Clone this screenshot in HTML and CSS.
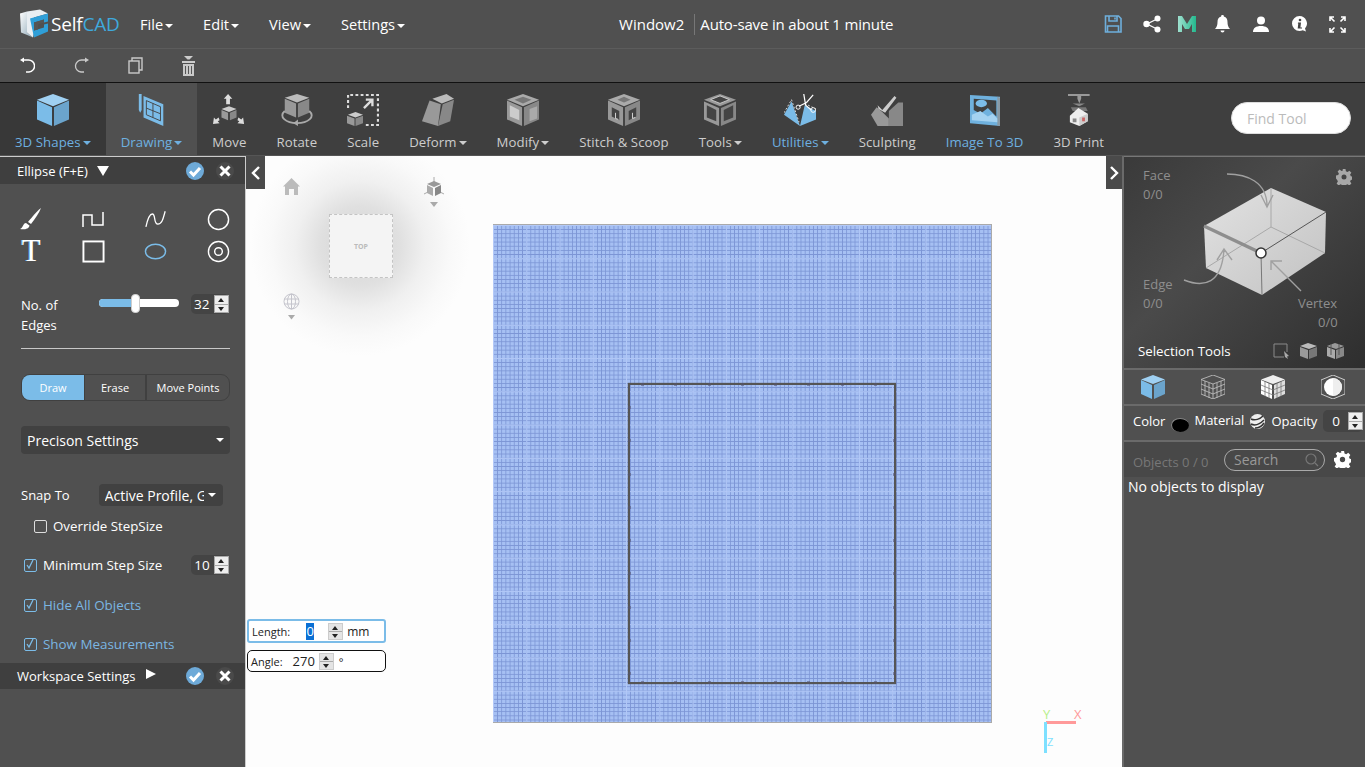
FILE: index.html
```html
<!DOCTYPE html>
<html lang="en">
<head>
<meta charset="utf-8">
<title>SelfCAD</title>
<link rel="stylesheet" href="styles.css">
</head>
<body>
<svg class="defs" width="0" height="0" aria-hidden="true">
  <defs>
    <linearGradient id="logoG" x1="0" y1="0" x2="1" y2="1"><stop offset="0" stop-color="#fff"/><stop offset="1" stop-color="#8fa9b8"/></linearGradient>
    <linearGradient id="mG" x1="0" y1="0" x2="1" y2="0"><stop offset="0" stop-color="#9fe0cf"/><stop offset="1" stop-color="#23b98e"/></linearGradient>
    <linearGradient id="boxG" x1="0" y1="0" x2="1" y2="1"><stop offset="0" stop-color="#e2e2e2"/><stop offset="1" stop-color="#c2c2c2"/></linearGradient>
  </defs>
</svg>
<header class="topbar">
  <div class="logo">
    <svg width="28" height="30" viewBox="0 0 28 29"><path d="M0 4 7 2v21l6 5-7-3-5-2z" fill="url(#logoG)"/><path d="M7 2 20 0 28 4 14 8v15l-1 5-6-5z" fill="#e9eef2"/><path d="M10 9l18-5v8l-4 1v-3l-10 3v8l10-3v-3l4-1v8l-14 6z" fill="#2f9fd8"/><path d="M14 13l10-3v3l-6 2v5l-4 1z" fill="#555"/></svg>
    <span class="logo-text">Self<span class="logo-cad">CAD</span></span>
  </div>
  <nav class="menu">
    <span class="menu-item">File<i class="caret"></i></span>
    <span class="menu-item">Edit<i class="caret"></i></span>
    <span class="menu-item">View<i class="caret"></i></span>
    <span class="menu-item">Settings<i class="caret"></i></span>
  </nav>
  <div class="title"><span>Window2</span><span class="title-sep"></span><span class="title-save">Auto-save in about 1 minute</span></div>
  <div class="top-icons">
    <svg class="ti-save" width="18" height="18" viewBox="0 0 18 18" fill="none" stroke="#6eaedb" stroke-width="1.6"><path d="M1.5 1h13l2.5 2.5V17H1.500z"/><path d="M5 1v5h8V1M11 2.500v2M3.500 17v-6h11v6"/></svg>
    <svg class="ti-share" width="18" height="18" viewBox="0 0 18 18"><g fill="#fff"><circle cx="14.500" cy="3.500" r="3"/><circle cx="3.500" cy="9" r="3.200"/><circle cx="14.500" cy="14.500" r="3"/></g><path d="M14 4 4 9l10 5" fill="none" stroke="#fff" stroke-width="1.300"/></svg>
    <svg class="ti-m" width="18" height="16" viewBox="0 0 18 16"><path d="M0 0h4l5 8 5-8h4v16h-4V8l-3 5H7L4 8v8H0z" fill="url(#mG)"/></svg>
    <svg class="ti-bell" width="15" height="18" viewBox="0 0 15 18"><path d="M7.500 0a1.300 1.300 0 0 1 1.300 1.600C11.500 2.300 12.500 4.500 12.500 7c0 3 .6 4.800 2.500 7H0c1.900-2.200 2.500-4 2.500-7 0-2.500 1-4.700 3.700-5.400A1.300 1.300 0 0 1 7.500 0z" fill="#fff"/><path d="M5.500 15.500h4a2 2 0 0 1-4 0z" fill="#fff"/></svg>
    <svg class="ti-user" width="16" height="16" viewBox="0 0 16 16"><circle cx="8" cy="4.500" r="4" fill="#fff"/><path d="M0 16c0-4 3-6 8-6s8 2 8 6z" fill="#fff"/></svg>
    <svg class="ti-info" width="15" height="16" viewBox="0 0 15 16"><path d="M7.500 0a7.500 7.500 0 1 0 0 15c1.200 0 2.200-.2 3.200-.7l3.300 1.200-1-3A7.500 7.500 0 0 0 7.500 0z" fill="#fff"/><circle cx="8" cy="4" r="1.300" fill="#444"/><path d="M6 6.500h3l-.6 5H10v1H5.700l.6-5H5.800z" fill="#444"/></svg>
    <svg class="ti-full" width="17" height="17" viewBox="0 0 17 17" fill="none" stroke="#fff" stroke-width="1.600"><path d="M1 5V1h4M1 1l4.500 4.500M12 1h4v4M16 1l-4.500 4.500M1 12v4h4M1 16l4.500-4.500M16 12v4h-4M16 16l-4.500-4.500"/></svg>
  </div>
</header>
<div class="quickbar">
  <svg class="q-undo" width="16" height="17" viewBox="0 0 16 17" fill="none" stroke="#fff" stroke-width="1.500"><path d="M4 3h5a6 6 0 0 1 1 12H7"/><path d="M1 3l4-2.500v5z" fill="#fff" stroke="none"/></svg>
  <svg class="q-redo" width="16" height="17" viewBox="0 0 16 17" fill="none" stroke="#c9c9c9" stroke-width="1.300"><path d="M12 3H8a6 6 0 0 0-1 12h3"/><path d="M15 3l-4-2.500v5z" fill="#c9c9c9" stroke="none"/></svg>
  <svg class="q-copy" width="15" height="17" viewBox="0 0 15 17" fill="none" stroke="#c9c9c9" stroke-width="1.400"><rect x="1" y="4" width="10" height="12"/><path d="M4 4V1h10v12h-3"/></svg>
  <svg class="q-trash" width="13" height="20" viewBox="0 0 13 20"><path d="M2 0h9L7.500 3.500h-2z" fill="#ccc"/><path d="M0 5h13v2H0z" fill="#ccc"/><path d="M1 8h11v12H1z" fill="#c9c9c9"/><path d="M3.500 10v8M6.500 10v8M9.500 10v8" stroke="#555"/></svg>
</div>
<div class="toolbar">
  <div class="tool tool-shapes blue">
    <svg viewBox="0 0 34 34"><path d="M17 0 34 6 17 13 0 6z" fill="#9fd0f2"/><path d="M0 7l16 7v20L0 27z" fill="#7bbce8"/><path d="M18 14l16-7v20l-16 7z" fill="#6ba4cc"/></svg>
    <span class="tool-label">3D Shapes<i class="caret"></i></span>
  </div>
  <div class="tool tool-drawing blue">
    <svg viewBox="0 0 34 34"><path d="M3 0h3v17l-1.500 3L3 17z" fill="#7bbce8"/><path d="M8 2l21 9v23L8 25z" fill="#7bbce8"/><path d="M11 7l15 6.500v15L11 22zM18 10v15M11 15l15 6" fill="none" stroke="#444" stroke-width="1"/></svg>
    <span class="tool-label">Drawing<i class="caret"></i></span>
  </div>
  <div class="tool">
    <svg viewBox="0 0 34 34"><path d="M16 0l4.500 5H18v6h-4V5h-2.500z" fill="#ddd"/><path d="M17 13l8 3-8 3-8-3z" fill="#ccc"/><path d="M9 17l7 3v8l-7-3z" fill="#999"/><path d="M18 20l7-3v8l-7 3z" fill="#888"/><path d="M0 32l1-7 2 2 3-2 1 3-2 1 2 2zM33 32l-1-7-2 2-3-2-1 3 2 1-2 2z" fill="#ddd"/></svg>
    <span class="tool-label">Move</span>
  </div>
  <div class="tool">
    <svg viewBox="0 0 34 34"><path d="M17 0l13 4-13 5L4 4z" fill="#bbb"/><path d="M4 5l12 5v15L4 20z" fill="#999"/><path d="M18 10l12-5v15l-12 5z" fill="#888"/><path d="M4 18C-3 24 5 31 17 31s20-7 13-13" fill="none" stroke="#aaa" stroke-width="2"/><path d="M18 27l-5 4 5 3z" fill="#aaa"/></svg>
    <span class="tool-label">Rotate</span>
  </div>
  <div class="tool">
    <svg viewBox="0 0 34 34"><path d="M1 15V1h32v32H20" fill="none" stroke="#ddd" stroke-width="2.500" stroke-dasharray="3 2.500"/><path d="M18 15 27 6M20 6h7v7" fill="none" stroke="#ddd" stroke-width="2.500"/><path d="M9 19l8 3-8 3-8-3z" fill="#ccc"/><path d="M0 23l8 3v8l-8-3z" fill="#999"/><path d="M9 26l8-3v8l-8 3z" fill="#888"/></svg>
    <span class="tool-label">Scale</span>
  </div>
  <div class="tool">
    <svg viewBox="0 0 34 34"><path d="M11 5 26 0l8 5-13 5z" fill="#bbb"/><path d="M8 7l12 4-3 23-17-5z" fill="#999"/><path d="M22 11l12-5-4 23-13 5z" fill="#888"/></svg>
    <span class="tool-label">Deform<i class="caret"></i></span>
  </div>
  <div class="tool">
    <svg viewBox="0 0 34 34"><path d="M17 0l17 6-17 7L0 6z" fill="#aaa"/><path d="M8 6l9-3 9 3-9 4z" fill="#777"/><path d="M0 7l16 7v20L0 27z" fill="#999"/><path d="M18 14l16-7v20l-16 7z" fill="#888"/><path d="M3 12l10 5v11L3 24z" fill="#ccc"/><path d="M24 16l8-3v13l-8 3z" fill="#aaa"/></svg>
    <span class="tool-label">Modify<i class="caret"></i></span>
  </div>
  <div class="tool">
    <svg viewBox="0 0 34 34"><path d="M17 0l17 6-17 7L0 6z" fill="#aaa"/><path d="M10 6l7-3 7 3-7 3z" fill="#777"/><path d="M0 7l16 7v20L0 27z" fill="#999"/><path d="M18 14l16-7v20l-16 7z" fill="#888"/><path d="M4 14l8 4v10l-8-4zM22 18l8-4v10l-8 4z" fill="#444"/><path d="M8 20v6l3 1M26 20v6l3-1" fill="none" stroke="#ddd"/></svg>
    <span class="tool-label">Stitch &amp; Scoop</span>
  </div>
  <div class="tool">
    <svg viewBox="0 0 34 34"><path d="M17 0l17 6-17 7L0 6z" fill="#999"/><path d="M7 6l10-4 10 4-10 4z" fill="#444" stroke="#ccc"/><path d="M0 8l16 7v19L0 27z" fill="#999"/><path d="M18 15l16-7v19l-16 7z" fill="#888"/><path d="M3 12l10 5v12L3 25zM21 17l10-5v13l-10 4z" fill="#444"/></svg>
    <span class="tool-label">Tools<i class="caret"></i></span>
  </div>
  <div class="tool blue">
    <svg viewBox="0 0 34 34"><path d="M0 22 8 8l9 26zM17 34l5-22 12 6v9z" fill="#7bbce8"/><path d="M0 20 8 6l8 24M22 10l12 6" fill="none" stroke="#ddd" stroke-dasharray="2 2"/><path d="M21 0l2 12 6 5M31 1 24 9l-8 4" fill="none" stroke="#fff" stroke-width="1.300"/><circle cx="31" cy="17" r="2.500" fill="none" stroke="#fff"/><circle cx="15" cy="14" r="2.200" fill="none" stroke="#fff"/></svg>
    <span class="tool-label">Utilities<i class="caret"></i></span>
  </div>
  <div class="tool">
    <svg viewBox="0 0 34 34"><path d="M0 22l6-8 6 5 7 7v8H7z" fill="#999"/><path d="M7 12l5 5L25 2l2 2-12 16-7-4z" fill="#ccc"/><path d="M19 34V18l10-9h5v25z" fill="#888"/></svg>
    <span class="tool-label">Sculpting</span>
  </div>
  <div class="tool blue">
    <svg viewBox="0 0 32 34"><path d="M0 1l32 2v31L0 31z" fill="#6fb1de"/><path d="M29 3l3 1v30l-3-.5z" fill="#8a9aa5"/><path d="M4 5l24 2v17l-9-9-8 6-7-4z" fill="#3f3f3f"/><ellipse cx="12" cy="10" rx="6" ry="4" fill="#7bbce8"/><path d="M2 22l9-4 8 6 5-3 5 5v4L2 28z" fill="#a4d2f1"/></svg>
    <span class="tool-label">Image To 3D</span>
  </div>
  <div class="tool">
    <svg viewBox="0 0 24 34"><path d="M0 0h23v2H14v3l-2 5-2-5V2H0z" fill="#999"/><path d="M5 10h13l-6 3z" fill="#888"/><path d="M3 14h16l2 4H5z" fill="#777"/><path d="M2 23l9-8 10 6v8l-9 5-10-4z" fill="#eee"/><path d="M12 25l9-4v8l-9 5z" fill="#ccc"/><rect x="5" y="26" width="4" height="4" fill="#888"/><rect x="15" y="25" width="3" height="4" fill="#c66"/></svg>
    <span class="tool-label">3D Print</span>
  </div>
  <div class="find">Find Tool</div>
</div>
<main class="workspace">
  <aside class="left">
    <div class="panel-head">
      <span class="panel-name">Ellipse (F+E)</span><i class="tri-down"></i>
      <span class="head-actions"><i class="ok"><svg width="18" height="18" viewBox="0 0 18 18"><path d="M4 9.500l3.500 3.500L14 6" fill="none" stroke="#fff" stroke-width="3"/></svg></i><i class="close"><svg width="12" height="12" viewBox="0 0 12 12"><path d="M1.500 1.500l9 9M10.500 1.500l-9 9" stroke="#fff" stroke-width="3"/></svg></i></span>
    </div>
    <div class="shapes">
      <svg width="22" height="22" viewBox="0 0 22 22"><path d="M21 0C17 3 12 9 8 14l3 2C15 11 19 5 21 0z" fill="#fff"/><path d="M6 15c-3 0-3 5-6 6 4 1 9 0 9.500-3.500z" fill="#fff"/></svg>
      <svg width="22" height="15" viewBox="0 0 22 15" fill="none" stroke="#fff" stroke-width="1.500"><path d="M1 15V3h9v10h11V0"/></svg>
      <svg width="22" height="17" viewBox="0 0 24 18" fill="none" stroke="#fff" stroke-width="1.400"><path d="M1 17C3 8 5 3 8 3c4 0 1 11 6 11 5 0 6-7 8-14"/></svg>
      <svg width="23" height="23" viewBox="0 0 24 24" fill="none" stroke="#fff" stroke-width="1.500"><circle cx="12" cy="12" r="10.500"/></svg>
      <span class="t-glyph">T</span>
      <svg width="23" height="23" viewBox="0 0 24 24" fill="none" stroke="#fff" stroke-width="2"><rect x="1.500" y="1.500" width="21" height="21"/></svg>
      <svg width="23" height="17" viewBox="0 0 24 17" fill="none" stroke="#7bbce8" stroke-width="1.500"><ellipse cx="12" cy="8.500" rx="10.500" ry="7.500"/></svg>
      <svg width="23" height="23" viewBox="0 0 24 24" fill="none" stroke="#fff" stroke-width="1.500"><circle cx="12" cy="12" r="10.500"/><circle cx="12" cy="12" r="4"/></svg>
    </div>
    <div class="edges-row">
      <span class="edges-label">No. of<br>Edges</span>
      <div class="slider"><div class="slider-fill"></div><div class="slider-knob"></div></div>
      <span class="num num-edges">32<i class="spin"><b></b><b></b></i></span>
    </div>
    <div class="rule"></div>
    <div class="btn-group"><span class="seg active seg-draw">Draw</span><span class="seg seg-erase">Erase</span><span class="seg seg-move">Move Points</span></div>
    <div class="precision">Precison Settings<i class="caret big"></i></div>
    <div class="snap-row"><span>Snap To</span><span class="snap-sel"><span class="snap-val">Active Profile, G</span><i class="caret"></i></span></div>
    <label class="override"><i class="box"></i>Override StepSize</label>
    <div class="check-row step-row"><i class="box on"><svg width="12" height="12" viewBox="0 0 12 12"><path d="M3 6l2 3 4-8" fill="none" stroke="#7bbce8" stroke-width="1.300"/></svg></i><span class="white">Minimum Step Size</span><span class="num num-step">10<i class="spin"><b></b><b></b></i></span></div>
    <div class="check-row hide-row"><i class="box on"><svg width="12" height="12" viewBox="0 0 12 12"><path d="M3 6l2 3 4-8" fill="none" stroke="#7bbce8" stroke-width="1.300"/></svg></i><span>Hide All Objects</span></div>
    <div class="check-row show-row"><i class="box on"><svg width="12" height="12" viewBox="0 0 12 12"><path d="M3 6l2 3 4-8" fill="none" stroke="#7bbce8" stroke-width="1.300"/></svg></i><span>Show Measurements</span></div>
    <div class="panel-head ws-head">
      <span class="panel-name">Workspace Settings</span><i class="tri-right"></i>
      <span class="head-actions"><i class="ok"><svg width="18" height="18" viewBox="0 0 18 18"><path d="M4 9.500l3.500 3.500L14 6" fill="none" stroke="#fff" stroke-width="3"/></svg></i><i class="close"><svg width="12" height="12" viewBox="0 0 12 12"><path d="M1.500 1.500l9 9M10.500 1.500l-9 9" stroke="#fff" stroke-width="3"/></svg></i></span>
    </div>
  </aside>
  <section class="viewport">
    <div class="glow"></div>
    <div class="collapse collapse-l"><svg width="10" height="16" viewBox="0 0 10 16"><path d="M8 2 2 8l6 6" fill="none" stroke="#fff" stroke-width="2.400"/></svg></div>
    <div class="collapse collapse-r"><svg width="10" height="16" viewBox="0 0 10 16"><path d="M2 2l6 6-6 6" fill="none" stroke="#fff" stroke-width="2.400"/></svg></div>
    <div class="viewcube">TOP</div>
    <svg class="v-home" width="17" height="17" viewBox="0 0 17 17"><path d="M8.500 0 17 8.500h-2V17h-4v-6H6v6H2V8.500H0z" fill="#bbb"/></svg>
    <svg class="v-cube" width="20" height="31" viewBox="0 0 20 31"><path d="M10 0v6M0 17l4-2M20 17l-4-2" stroke="#aaa"/><path d="M10 4l7 3-7 3-7-3z" fill="#999"/><path d="M3 8l6 3v8l-6-3z" fill="#aaa"/><path d="M11 11l6-3v8l-6 3z" fill="#888"/><path d="M6 25h8l-4 5z" fill="#aaa"/></svg>
    <svg class="v-globe" width="17" height="27" viewBox="0 0 17 27" fill="none" stroke="#c4c4cc"><circle cx="8.500" cy="8.500" r="7.500"/><ellipse cx="8.500" cy="8.500" rx="4" ry="7.500"/><path d="M1 6h15M1 11h15M8.500 1v15"/><path d="M5 22h7l-3.500 4.500z" fill="#aaa" stroke="none"/></svg>
    <div class="grid-plane"><div class="sketch"></div></div>
    <div class="measure m-length"><span class="m-label">Length:</span><span class="m-sel">0</span><i class="spin"><b></b><b></b></i><span class="m-unit">mm</span></div>
    <div class="measure m-angle"><span class="m-label">Angle:</span><span class="m-val">270</span><i class="spin"><b></b><b></b></i><span class="m-unit">°</span></div>
    <div class="axes"><span class="ax-y">Y</span><span class="ax-x">X</span><span class="ax-z">Z</span></div>
  </section>
  <aside class="right">
    <div class="sel-box">
      <svg class="sel-art" width="241" height="210" viewBox="0 0 241 210">
        <path d="M147 31 202 55 201 96 138 138 82 111 80 69z" fill="url(#boxG)"/>
        <path d="M147 31v39M147 70 82 111M147 70l54 26" stroke="#a8a8a8" fill="none"/>
        <path d="M137 96 202 55" stroke="#555" fill="none"/>
        <path d="M137 96l1 42" stroke="#777" fill="none"/>
        <path d="M80 69l57 27" stroke="#8e8e8e" stroke-width="3.500" fill="none"/>
        <circle cx="137" cy="96" r="5" fill="#fff" stroke="#333" stroke-width="1.500"/>
        <path d="M103 17c20 0 40 8 40 32M137 38l6 12 6-12" fill="none" stroke="#a0a0a0" stroke-width="1.400"/>
        <path d="M60 123c20 8 38 4 40-31M93 103l7-11 8 11" fill="none" stroke="#a0a0a0" stroke-width="1.400"/>
        <path d="M177 134l-30-30M147 113v-9h11" fill="none" stroke="#a0a0a0" stroke-width="1.400"/>
      </svg>
      <span class="sel-face">Face<br>0/0</span>
      <span class="sel-edge">Edge<br>0/0</span>
      <span class="sel-vertex">Vertex<br><span class="sel-v-num">0/0</span></span>
      <svg class="sel-gear" width="16" height="16" viewBox="0 0 16 16"><path d="M6.500 0h3l.4 2.300 1.600.7 1.900-1.300 2 2-1.300 1.900.7 1.600 2.200.4v3l-2.200.4-.7 1.600 1.300 1.900-2 2-1.900-1.300-1.600.7-.4 2.200h-3l-.4-2.200-1.600-.7-1.900 1.300-2-2 1.300-1.900-.7-1.600L0 9.500v-3l2.200-.4.700-1.600L1.600 2.600l2-2 1.900 1.300 1.600-.7zM8 5.500a2.500 2.500 0 1 0 0 5 2.500 2.500 0 0 0 0-5z" fill="#a8a8a8" fill-rule="evenodd"/></svg>
      <div class="sel-tools">
        <span class="sel-title">Selection Tools</span>
        <svg class="st1" width="17" height="16" viewBox="0 0 17 16"><path d="M11 14H1V1h13v8" fill="none" stroke="#8a8a8a" stroke-width="1"/><path d="M11 8l5 5-2 .5 1 2.500-3-2z" fill="#aaa"/></svg>
        <svg class="st2" width="17" height="16" viewBox="0 0 17 16"><path d="M0 3l8-3 9 3-8 3z" fill="#bbb"/><path d="M0 4l8 3v9l-8-3z" fill="#999"/><path d="M9 7l8-3v9l-8 3z" fill="#777"/></svg>
        <svg class="st3" width="17" height="16" viewBox="0 0 17 16"><path d="M0 3l8-3 9 3-8 3z" fill="#999"/><path d="M0 4l8 3v9l-8-3z" fill="#aaa"/><path d="M9 7l8-3v9l-8 3z" fill="#888"/><path d="M4 1v11M12 1v11" stroke="#555"/></svg>
      </div>
    </div>
    <div class="view-modes">
      <svg width="24" height="24" viewBox="0 0 24 24"><path d="M12 0l12 4.500L12 9 0 4.500z" fill="#9fd0f2"/><path d="M0 5l11 5v14L0 19z" fill="#7bbce8"/><path d="M13 10l11-5v14l-11 5z" fill="#6ba4cc"/></svg>
      <svg width="24" height="24" viewBox="0 0 24 24" fill="none" stroke="#bbb" stroke-width=".9"><path d="M12 0l12 4.500L12 9 0 4.500zM0 4.500V19l12 5V9M24 4.500V19l-12 5M4 6v15M8 8v15M16 8v15M20 6v15M0 9l12 5 12-5M0 14l12 5 12-5"/></svg>
      <svg width="24" height="24" viewBox="0 0 24 24"><path d="M12 0l12 4.500L12 9 0 4.500z" fill="#eee"/><path d="M0 5l11 5v14L0 19z" fill="#fff"/><path d="M13 10l11-5v14l-11 5z" fill="#ddd"/><path d="M4 6v15M8 8v15M16 8v15M20 6v15M0 10l12 5 12-5M0 15l12 5 12-5" stroke="#777" stroke-width=".8" fill="none"/></svg>
      <svg width="24" height="24" viewBox="0 0 24 24"><path d="M12 0 24 5v14l-12 5L0 19V5z" fill="none" stroke="#ccc"/><circle cx="12" cy="12" r="9" fill="#fff"/><path d="M12 3a9 9 0 0 1 0 18z" fill="#eee"/></svg>
    </div>
    <div class="props">
      <span class="p-color">Color</span><i class="swatch"></i>
      <span class="p-mat">Material</span>
      <svg class="p-ball" width="15" height="15" viewBox="0 0 15 15"><circle cx="7.500" cy="7.500" r="7.500" fill="#eee"/><path d="M1 5c4 2 9 0 12-3M1 10c4 2 9 0 13-4M5 14c3 0 7-2 9-5" fill="none" stroke="#333" stroke-width="1.500"/></svg>
      <span class="p-op">Opacity</span>
      <span class="num num-op">0<i class="spin"><b></b><b></b></i></span>
    </div>
    <div class="obj-head">
      <span class="obj-count">Objects 0 / 0</span>
      <span class="search">Search<svg width="14" height="14" viewBox="0 0 14 14" fill="none" stroke="#777" stroke-width="1.200"><circle cx="6" cy="6" r="5"/><path d="M10 10l3 3"/></svg></span>
      <svg class="obj-gear" width="17" height="17" viewBox="0 0 16 16"><path d="M6.500 0h3l.4 2.300 1.600.7 1.900-1.300 2 2-1.300 1.900.7 1.600 2.200.4v3l-2.200.4-.7 1.600 1.300 1.900-2 2-1.900-1.300-1.600.7-.4 2.200h-3l-.4-2.200-1.600-.7-1.900 1.300-2-2 1.300-1.900-.7-1.600L0 9.500v-3l2.200-.4.700-1.600L1.600 2.600l2-2 1.900 1.300 1.600-.7zM8 5.500a2.500 2.500 0 1 0 0 5 2.500 2.500 0 0 0 0-5z" fill="#fff" fill-rule="evenodd"/></svg>
    </div>
    <div class="obj-list">No objects to display</div>
  </aside>
</main>
</body>
</html>
```
FILE: styles.css
```css
* { box-sizing: border-box; }
html, body { margin: 0; height: 100%; }
body {
  display: flex; flex-direction: column; height: 767px; overflow: hidden;
  font-family: "Open Sans", "Liberation Sans", sans-serif; color: #fff; background: #505050;
}
i { font-style: normal; display: inline-block; }
svg { display: block; flex: none; }
.defs { position: absolute; }
.caret { width: 0; height: 0; border-left: 4px solid transparent; border-right: 4px solid transparent; border-top: 4px solid currentColor; margin-left: 2px; vertical-align: middle; }

.topbar { height: 49px; flex: none; display: flex; align-items: center; background: #505050; border-bottom: 1px solid #5c5c5c; }
.logo { display: flex; align-items: center; margin-left: 20px; width: 120px; }
.logo-text { font-size: 19px; margin-left: 3px; letter-spacing: -.2px; }
.logo-cad { color: #3fa9dc; }
.menu { display: flex; gap: 30px; font-size: 14.6px; }
.menu-item { white-space: nowrap; }
.title { margin-left: 214px; display: flex; align-items: center; font-size: 15px; white-space: nowrap; }
.title-sep { width: 1px; height: 21px; background: #777; margin: 0 5px 0 10px; }
.title-save { letter-spacing: -.16px; }
.top-icons { margin-left: auto; margin-right: 19px; display: flex; align-items: center; }
.ti-share { margin-left: 21px; }
.ti-m { margin-left: 17px; }
.ti-bell { margin-left: 19px; }
.ti-user { margin-left: 23px; }
.ti-info { margin-left: 23px; }
.ti-full { margin-left: 22px; }

.quickbar { height: 34px; flex: none; display: flex; align-items: center; padding-left: 19px; background: #505050; border-bottom: 1px solid #111; }
.q-redo { margin-left: 39px; }
.q-copy { margin-left: 38px; }
.q-trash { margin-left: 39px; }

.toolbar { height: 73px; flex: none; display: flex; background: #3f3f3f; border-bottom: 1px solid #555; position: relative; }
.tool { display: flex; flex-direction: column; align-items: center; padding: 11px 15px 0; color: #cdcdcd; }
.tool svg { height: 32px; width: auto; }
.tool-label { margin-top: 7px; font-size: 13.2px; letter-spacing: .08px; line-height: 18px; white-space: nowrap; }
.blue { color: #6eb0e0; }
.tool-shapes { background: #383838; }
.tool-drawing { background: #505050; }
.find { margin: 19px 14px 0 auto; width: 120px; height: 32px; border-radius: 16px; background: #fff; border: 1px solid #ddd; color: #bbb; font-size: 14px; line-height: 31px; padding-left: 15px; }

.workspace { flex: 1; min-height: 0; display: flex; }

.left { width: 246px; flex: none; background: #505050; border-right: 1px solid #ccc; font-size: 13px; display: flex; flex-direction: column; }
.panel-head { height: 28px; flex: none; display: flex; align-items: center; background: #3f3f3f; padding-left: 17px; border-top: 1px solid #ccc; }
.panel-name { font-size: 13px; white-space: nowrap; }
.tri-down { margin-left: 9px; width: 0; height: 0; border-left: 6px solid transparent; border-right: 6px solid transparent; border-top: 10px solid #fff; }
.tri-right { margin-left: 11px; margin-top: -5px; width: 0; height: 0; border-top: 5.500px solid transparent; border-bottom: 5.500px solid transparent; border-left: 10px solid #fff; }
.head-actions { margin-left: auto; margin-right: 11px; display: flex; align-items: center; gap: 12px; }
.ok { width: 18px; height: 18px; border-radius: 50%; background: #6eaad8; }
.close { width: 18px; height: 18px; border-radius: 50%; background: #4a4a4a; padding: 3px; }
.shapes { display: grid; grid-template-columns: repeat(4, 62.3px); grid-auto-rows: 32px; justify-items: center; align-items: center; margin-top: 19px; }
.t-glyph { font-family: "Liberation Serif", serif; font-size: 31px; line-height: 28px; color: #fff; text-shadow: -1px 0 #6eb0e0; }
.edges-row { margin-top: 18px; display: flex; padding-left: 21px; height: 63px; position: relative; }
.edges-label { line-height: 20px; width: 78px; margin-top: 10px; }
.slider { width: 80px; height: 8px; margin-top: 14px; border-radius: 4px; background: #fff; position: relative; }
.slider-fill { width: 36px; height: 100%; border-radius: 4px 0 0 4px; background: #7bbce8; }
.slider-knob { position: absolute; left: 32px; top: -5px; width: 9px; height: 19px; border-radius: 4px; background: #fff; border: 1px solid #ccc; }
.num { display: flex; align-items: center; color: #fff; background: #444; border-radius: 5px; height: 20px; font-size: 13.500px; }
.num-edges { width: 38px; margin-left: 12px; margin-top: 9px; padding-left: 3px; justify-content: space-between; }
.spin { display: flex; flex-direction: column; width: 15px; height: 18px; background: #eee; border: 1px solid #aaa; }
.spin b { flex: 1; position: relative; }
.spin b:first-child { border-bottom: 1px solid #aaa; }
.spin b::after { content: ""; position: absolute; left: 3px; top: 2px; width: 0; height: 0; border-left: 3.500px solid transparent; border-right: 3.500px solid transparent; }
.spin b:first-child::after { border-bottom: 4px solid #222; }
.spin b:last-child::after { border-top: 4px solid #222; }
.rule { height: 1px; background: #c8c8c8; margin: 0 15px 0 21px; }
.btn-group { display: flex; margin: 25px 15px 0 21px; height: 27px; border: 1px solid #404040; border-radius: 9px; font-size: 11px; line-height: 25px; text-align: center; overflow: hidden; }
.seg { border-right: 2px solid #404040; }
.seg-draw { width: 63px; background: #7bbce8; border-right: 1px solid #404040; }
.seg-erase { width: 62px; }
.seg-move { flex: 1; border-right: 0; }
.precision { display: flex; align-items: center; justify-content: space-between; margin: 25px 15px 0 21px; height: 28px; padding: 0 6px; background: #414141; border-radius: 4px; font-size: 14px; }
.snap-row { display: flex; align-items: center; margin: 30px 0 0 21px; font-size: 13px; }
.snap-sel { margin-left: 29px; display: flex; align-items: center; width: 124px; height: 22px; padding-left: 6px; background: #414141; border-radius: 4px; font-size: 14px; }
.snap-val { width: 99px; overflow: hidden; white-space: nowrap; }
.snap-sel .caret { margin-left: 4px; }
.override { display: flex; align-items: center; margin: 9px 0 0 34px; font-size: 13.3px; height: 22px; }
.box { width: 13px; height: 13px; border: 1px solid #ddd; border-radius: 2px; margin-right: 6px; }
.box.on { width: 13px; height: 13px; border-color: #7bbce8; }
.box.on svg { margin: -1px 0 0 -1px; }
.check-row { display: flex; align-items: center; height: 22px; padding-left: 24px; color: #7bb6e2; font-size: 13.4px; }
.check-row .box { margin-right: 6px; }
.white { color: #fff; }
.step-row { margin-top: 17px; }
.hide-row { margin-top: 18px; }
.show-row { margin-top: 17px; }
.num-step { margin-left: 29px; width: 38px; padding-left: 3px; justify-content: space-between; }
.ws-head { margin-top: 8px; height: 26px; border-top: 0; }

.viewport { flex: 1; position: relative; background: #fdfdfd; overflow: hidden; }
.collapse { position: absolute; top: 0; width: 19px; height: 33px; background: #4a4a4a; display: flex; align-items: center; justify-content: center; }
.collapse-l { left: 0; }
.collapse-r { right: 0; width: 16px; }
.glow { position: absolute; left: 0; top: 0; width: 230px; height: 210px; background: radial-gradient(circle at 114px 90px, #d2d2d2 0, #e0e0e0 40px, #f0f0f0 65px, #f9f9f9 90px, #fdfdfd 110px); }
.viewcube { position: absolute; left: 83px; top: 58px; width: 64px; height: 64px; border: 1px dashed #c4c4c4; background: #f4f4f4; color: #bbb; font-size: 7px; font-weight: 700; text-align: center; line-height: 64px; }
.v-home { position: absolute; left: 37px; top: 22px; }
.v-cube { position: absolute; left: 178px; top: 21px; }
.v-globe { position: absolute; left: 37px; top: 137px; }
.grid-plane {
  position: absolute; left: 247px; top: 68px; width: 499px; height: 499px; background-color: #a6c0f3;
  background-image:
    linear-gradient(90deg, #b4caf8 1px, transparent 1px),
    linear-gradient(#b4caf8 1px, transparent 1px),
    linear-gradient(90deg, #7c95d5 1px, transparent 1px),
    linear-gradient(#7c95d5 1px, transparent 1px);
  background-size: 33.27px 33.27px, 33.27px 33.27px, 4.16px 4.16px, 4.16px 4.16px;
  border-right: 1px solid #aaa; border-bottom: 1px solid #aaa; border-top: 1px solid #aaa;
}
.sketch { position: absolute; left: 135px; top: 158px; width: 268px; height: 301px; border: 2px solid #555; box-shadow: 0 0 1px #555; }
.sketch::before {
  content: ""; position: absolute; inset: -4px;
  background-image:
    repeating-linear-gradient(90deg, transparent 0 15px, rgba(85,85,110,.55) 15px 18px, transparent 18px 33.27px),
    repeating-linear-gradient(90deg, transparent 0 15px, rgba(85,85,110,.55) 15px 18px, transparent 18px 33.27px),
    repeating-linear-gradient(transparent 0 25px, rgba(85,85,110,.55) 25px 28px, transparent 28px 33.27px),
    repeating-linear-gradient(transparent 0 25px, rgba(85,85,110,.55) 25px 28px, transparent 28px 33.27px);
  background-size: 100% 3px, 100% 3px, 3px 100%, 3px 100%;
  background-position: 0 2px, 0 calc(100% - 2px), 2px 0, calc(100% - 2px) 0;
  background-repeat: no-repeat;
}
.measure { position: absolute; left: 1px; width: 139px; display: flex; align-items: center; color: #222; background: #fff; font-size: 11px; }
.m-length { top: 463px; height: 24px; border: 2px solid #7bbce8; border-radius: 3px; padding-left: 3px; }
.m-angle { top: 494px; height: 22px; border: 1px solid #111; border-radius: 5px; padding-left: 3px; }
.m-sel { margin-left: 16px; width: 8px; height: 17px; line-height: 17px; text-align: center; background: #0a6fd4; color: #fff; font-size: 13px; }
.measure .spin { width: 15px; height: 17px; background: #e4e4e4; border-color: #ccc; }
.m-length .spin { margin-left: 14px; }
.m-length .m-unit { margin-left: 4px; font-size: 12px; }
.m-val { margin-left: 10px; font-size: 13px; }
.m-angle .spin { margin-left: 4px; }
.m-angle .m-unit { margin-left: 5px; }
.axes { position: absolute; left: 800px; top: 553px; width: 34px; height: 46px; font-size: 13px; line-height: 12px; }
.axes::before { content: ""; position: absolute; left: 0; top: 12px; width: 30px; height: 3px; background: #ff9a9a; }
.axes::after { content: ""; position: absolute; left: -2px; top: 13px; width: 3px; height: 31px; background: #7de0ff; }
.ax-y { position: absolute; left: -3px; top: -1px; color: #b8ef8a; }
.ax-x { position: absolute; left: 28px; top: -1px; color: #ff9a9a; }
.ax-z { position: absolute; left: 1px; top: 27px; color: #7de0ff; font-size: 11px; }

.right { width: 243px; flex: none; background: #505050; border-left: 2px solid #6a6a6a; font-size: 13px; display: flex; flex-direction: column; }
.sel-box { height: 214px; flex: none; position: relative; border-top: 1px solid #777; border-bottom: 2px solid #6a6a6a; background: linear-gradient(135deg, #3a3a3a, #4a4a4a 40%, #2e2e2e); color: #8e8e8e; }
.sel-art { position: absolute; left: 0; top: 0; }
.sel-face, .sel-edge, .sel-vertex { position: absolute; line-height: 19px; }
.sel-face { left: 19px; top: 9px; }
.sel-edge { left: 19px; top: 118px; }
.sel-vertex { left: 174px; top: 137px; }
.sel-v-num { margin-left: 20px; }
.sel-gear { position: absolute; left: 212px; top: 12px; }
.sel-tools { position: absolute; left: 14px; top: 186px; right: 0; height: 16px; display: flex; align-items: center; font-size: 13.3px; }
.sel-title { color: #fff; width: 135px; }
.st2, .st3 { margin-left: 10px; }
.view-modes { height: 36px; flex: none; display: grid; grid-template-columns: 60px 60px 60px 60px; justify-items: center; align-items: center; border-bottom: 2px solid #6a6a6a; margin-left: -1px; }
.props { height: 36px; flex: none; display: flex; align-items: center; padding: 0 0 4px 9px; border-bottom: 2px solid #6a6a6a; }
.swatch { width: 18px; height: 14px; margin: 8px 0 0 6px; border-radius: 50%; background: #000; border: 1px solid #888; border-width: 1px 0 0 1px; }
.p-mat { margin: -2px 0 0 5px; }
.p-ball { margin-left: 6px; }
.p-op { margin-left: 6px; }
.num-op { width: 40px; height: 22px; margin-left: 6px; padding-left: 9px; justify-content: space-between; }
.obj-head { height: 35px; flex: none; display: flex; align-items: center; background: #484848; padding-left: 9px; }
.obj-count { color: #777; font-size: 13px; width: 91px; margin-top: 4px; }
.search { display: flex; align-items: center; justify-content: space-between; width: 101px; height: 22px; border: 1px solid #aaa; border-radius: 11px; color: #999; font-size: 14px; padding: 0 5px 0 9px; }
.obj-gear { margin-left: 9px; }
.obj-list { padding: 0 0 0 4px; font-size: 14px; line-height: 20px; }
```
